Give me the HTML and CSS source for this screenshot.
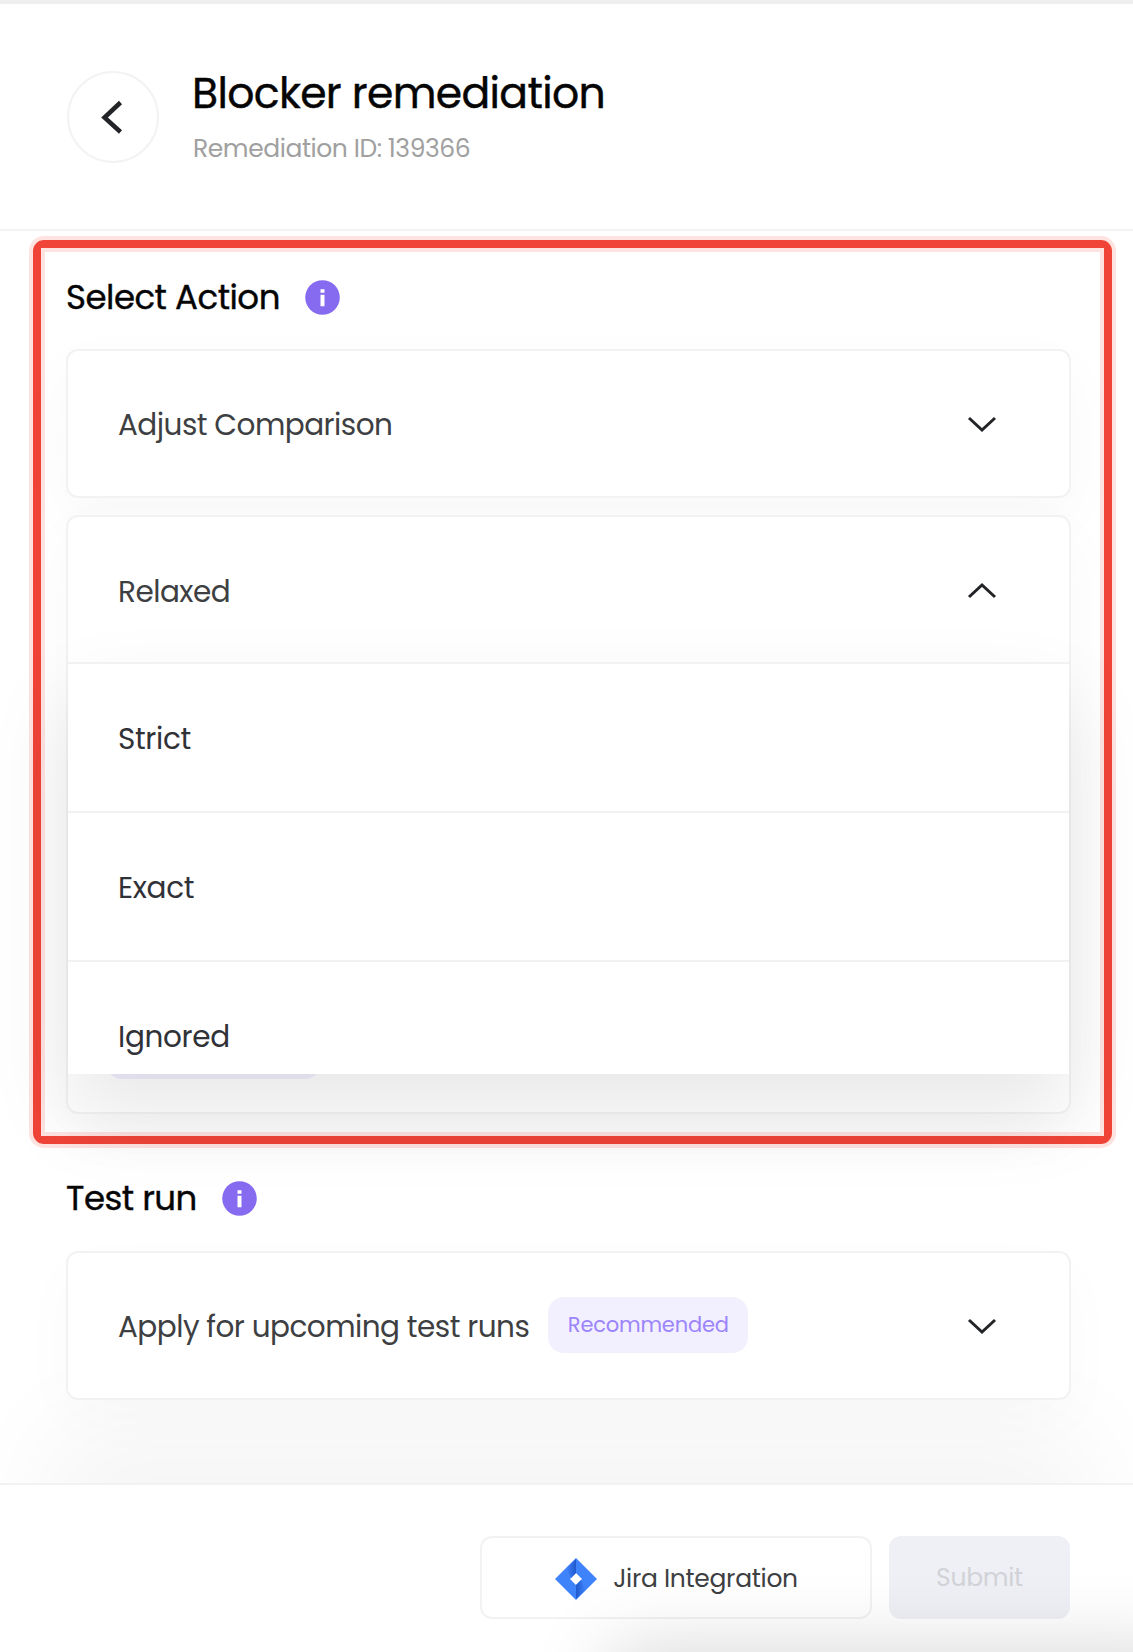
FILE: index.html
```html
<!DOCTYPE html>
<html lang="en">
<head>
<meta charset="utf-8">
<title>Blocker remediation</title>
<link rel="stylesheet" href="styles.css">
</head>
<body>
<div class="panel">
  <header class="header">
    <button class="back" aria-label="Back"><svg width="26" height="36" viewBox="0 0 26 36"><path d="M20.500 3.500 4.500 18.500 20.500 33" /></svg></button>
    <div class="heading">
      <h1 class="title">Blocker remediation</h1>
      <p class="subtitle">Remediation ID: 139366</p>
    </div>
  </header>
  <main class="content">
    <section class="section highlight">
      <h2 class="section-title"><span>Select Action</span>
        <svg class="info" width="35" height="35" viewBox="0 0 35 35"><circle cx="17.500" cy="17.500" r="17.300"/><path d="M15.500 9.300h4v3.400h-4zM15.500 14.800h4v11.400h-4z"/></svg></h2>
      <div class="card"><span class="value">Adjust Comparison</span>
        <svg class="chevron" width="30" height="20" viewBox="0 0 30 20"><path d="M2 4 15 16 28 4"/></svg></div>
      <div class="card select">
        <div class="current"><span class="value">Relaxed</span>
          <svg class="chevron" width="30" height="20" viewBox="0 0 30 20"><path d="M2 16 15 4 28 16"/></svg></div>
        <div class="under-badge"></div>
        <ul class="menu">
          <li>Strict</li>
          <li>Exact</li>
          <li>Ignored</li>
        </ul>
      </div>
    </section>
    <section class="section run">
      <h2 class="section-title"><span>Test run</span>
        <svg class="info" width="35" height="35" viewBox="0 0 35 35"><circle cx="17.500" cy="17.500" r="17.300"/><path d="M15.500 9.300h4v3.400h-4zM15.500 14.800h4v11.400h-4z"/></svg></h2>
      <div class="card"><span class="value">Apply for upcoming test runs</span><span class="badge">Recommended</span>
        <svg class="chevron" width="30" height="20" viewBox="0 0 30 20"><path d="M2 4 15 16 28 4"/></svg></div>
    </section>
  </main>
  <footer class="footer">
    <button class="btn jira">
      <svg width="42" height="42" viewBox="0 0 42 42"><defs><linearGradient id="fold" x1="0" y1="0" x2="1" y2="0"><stop offset="0" stop-color="#3f83fb"/><stop offset="1" stop-color="#2058cc"/></linearGradient><linearGradient id="fold2" x1="1" y1="0" x2="0" y2="0"><stop offset="0" stop-color="#3f83fb"/><stop offset="1" stop-color="#2058cc"/></linearGradient></defs><path fill="#3f83fb" fill-rule="evenodd" d="M21 0 42 21 21 42 0 21ZM21 15 15 21 21 27 27 21Z"/><path fill="url(#fold)" d="M21 1v14l-5 5-4.500-10Z"/><path fill="url(#fold2)" d="M21 41V27l5-5 4.500 10Z"/></svg>
      <span>Jira Integration</span></button>
    <button class="btn submit"><span>Submit</span></button>
  </footer>
</div>
</body>
</html>
```
FILE: styles.css
```css
* { box-sizing: border-box; }
body { margin: 0; background: #fff; font-family: Poppins, Inter, sans-serif; color: #3e3f42; }
h1, h2, p, ul { margin: 0; padding: 0; font-weight: 400; }
button { font: inherit; color: inherit; padding: 0; }
span { white-space: nowrap; }
.panel { position: relative; width: 1133px; height: 1652px; display: flex; flex-direction: column; overflow: hidden; border-top: 4px solid #eee; }
.panel::after { content: ""; position: absolute; z-index: 3; left: 610px; right: -60px; top: 100%; height: 100px; box-shadow: 0 0 80px rgba(0,0,0,.17); }
.header { display: flex; align-items: flex-start; height: 227px; padding: 67px 67px 0; border-bottom: 2px solid #f3f3f3; flex: none; }
.back { width: 92px; height: 92px; border: 2px solid #f3f3f3; border-radius: 50%; background: #fff; display: flex; align-items: center; justify-content: center; }
.back path { fill: none; stroke: #222428; stroke-width: 4.500; }
.heading { padding-left: 33px; }
.title { font-size: 42.500px; line-height: 50px; color: #050505; margin-top: -3px; letter-spacing: -.65px; -webkit-text-stroke: .4px #050505; }
.subtitle { font-size: 25px; line-height: 32px; color: #a0a0a0; margin: 15px 0 0 1px; letter-spacing: -.43px; }
.content { flex: 1; display: flex; flex-direction: column; padding: 9px 21px 0 33px; }
.highlight { position: relative; z-index: 1; height: 904px; border: 8px solid #f04438; border-radius: 11px; box-shadow: 0 0 0 4px #ffe3e1; padding: 32px 33px 0 25px; }
.highlight::before { content: ""; position: absolute; inset: 0; box-shadow: inset 0 0 0 4px #ffe3e1; pointer-events: none; }
.section-title { display: flex; align-items: center; height: 35px; font-size: 34px; line-height: 35px; color: #050505; letter-spacing: -.5px; -webkit-text-stroke: .4px #050505; }
.info { margin-left: 25px; }
.info circle { fill: #866af0; }
.info path { fill: #fff; }
.info, .info * { -webkit-text-stroke: 0; }
.card { position: relative; display: flex; align-items: center; height: 149px; padding: 0 72px 0 50px; background: #fff; border: 2px solid #f2f2f2; border-radius: 12px; font-size: 29.500px; box-shadow: 0 20px 60px rgba(0,0,0,.03); }
.value { letter-spacing: -.53px; padding-top: 2px; }
.highlight .card { margin-top: 34px; }
.highlight .select { margin-top: 17px; height: 599px; display: block; padding: 0; }
.current { display: flex; align-items: center; height: 145px; padding: 2px 72px 0 50px; }
.chevron { margin-left: auto; }
.chevron path { fill: none; stroke: #222428; stroke-width: 3; }
.under-badge { position: absolute; left: 38px; top: 505px; width: 215px; height: 57px; border-radius: 16px; background: #f2effe; }
.menu { position: absolute; left: 0; right: 0; top: 145px; height: 412px; overflow: hidden; list-style: none; background: #fff; color: #303238; box-shadow: 0 40px 80px rgba(0,0,0,.093); letter-spacing: -.35px; }
.menu li { height: 149px; padding: 2px 0 0 50px; border-top: 2px solid #f2f2f2; display: flex; align-items: center; }
.run { padding: 37px 62px 0 33px; margin-right: -21px; }
.run .card { margin-top: 35px; box-shadow: 0 20px 60px rgba(0,0,0,.025), 0 195px 110px 20px rgba(0,0,0,.045); }
.badge { margin: -2px 0 0 19px; width: 200px; height: 56px; border-radius: 16px; background: #f2effe; color: #9c84fb; font-size: 21px; letter-spacing: -.2px; display: flex; align-items: center; justify-content: center; }
.footer { position: relative; z-index: 2; flex: none; display: flex; justify-content: flex-end; gap: 17px; height: 169px; padding: 51px 63px 0; border-top: 2px solid #f2f2f2; background: #fff; }
.btn { height: 83px; border-radius: 12px; display: flex; align-items: center; justify-content: center; font-size: 25px; letter-spacing: -.3px; }
.jira { width: 392px; background: #fff; border: 2px solid #f2f2f2; gap: 16px; padding: 2px 0 0 1px; }
.submit { width: 181px; background: #eff0f5; border: 0; color: #d2d3d8; }
```
